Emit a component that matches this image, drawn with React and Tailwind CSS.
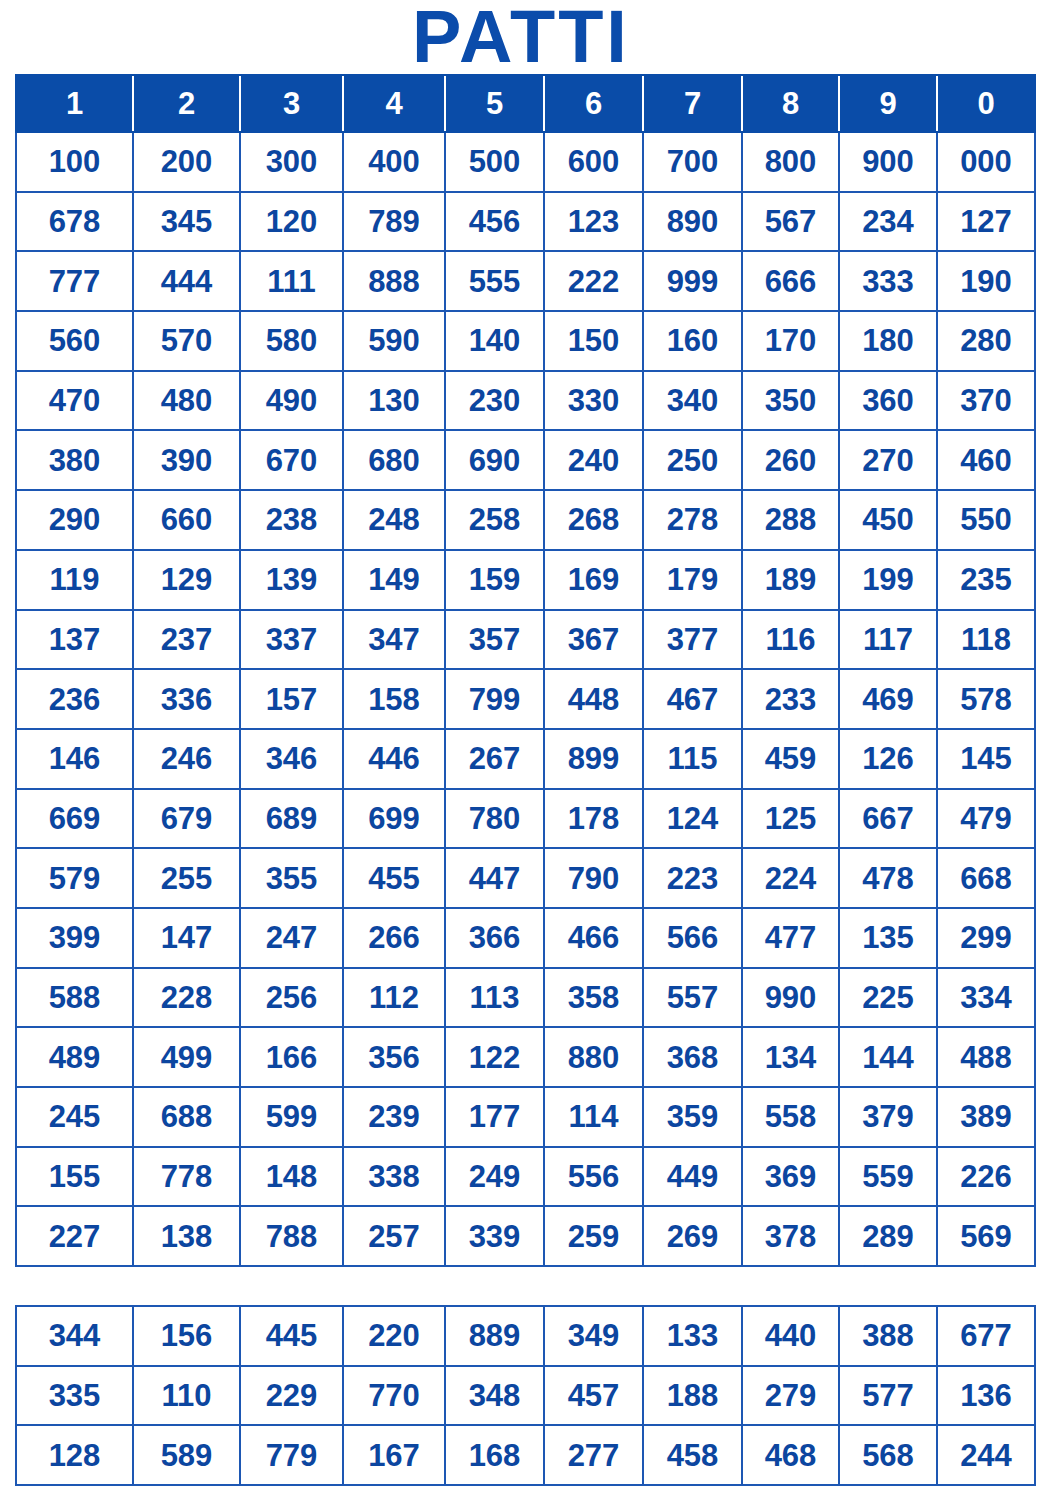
const header = ['1', '2', '3', '4', '5', '6', '7', '8', '9', '0'];

const widths = ['w-[117px]', 'w-[107px]', 'w-[103px]', 'w-[102px]', 'w-[99px]', 'w-[99px]', 'w-[99px]', 'w-[97px]', 'w-[98px]', 'w-[98px]'];

const mainRows = [
  ['100', '200', '300', '400', '500', '600', '700', '800', '900', '000'],
  ['678', '345', '120', '789', '456', '123', '890', '567', '234', '127'],
  ['777', '444', '111', '888', '555', '222', '999', '666', '333', '190'],
  ['560', '570', '580', '590', '140', '150', '160', '170', '180', '280'],
  ['470', '480', '490', '130', '230', '330', '340', '350', '360', '370'],
  ['380', '390', '670', '680', '690', '240', '250', '260', '270', '460'],
  ['290', '660', '238', '248', '258', '268', '278', '288', '450', '550'],
  ['119', '129', '139', '149', '159', '169', '179', '189', '199', '235'],
  ['137', '237', '337', '347', '357', '367', '377', '116', '117', '118'],
  ['236', '336', '157', '158', '799', '448', '467', '233', '469', '578'],
  ['146', '246', '346', '446', '267', '899', '115', '459', '126', '145'],
  ['669', '679', '689', '699', '780', '178', '124', '125', '667', '479'],
  ['579', '255', '355', '455', '447', '790', '223', '224', '478', '668'],
  ['399', '147', '247', '266', '366', '466', '566', '477', '135', '299'],
  ['588', '228', '256', '112', '113', '358', '557', '990', '225', '334'],
  ['489', '499', '166', '356', '122', '880', '368', '134', '144', '488'],
  ['245', '688', '599', '239', '177', '114', '359', '558', '379', '389'],
  ['155', '778', '148', '338', '249', '556', '449', '369', '559', '226'],
  ['227', '138', '788', '257', '339', '259', '269', '378', '289', '569'],
];

const extraRows = [
  ['344', '156', '445', '220', '889', '349', '133', '440', '388', '677'],
  ['335', '110', '229', '770', '348', '457', '188', '279', '577', '136'],
  ['128', '589', '779', '167', '168', '277', '458', '468', '568', '244'],
];

function Cols() {
  return (
    <colgroup>
      {widths.map((w, i) => (
        <col key={i} className={w} />
      ))}
    </colgroup>
  );
}

function Body({ rows }) {
  return (
    <tbody>
      {rows.map((row, r) => (
        <tr key={r}>
          {row.map((n, c) => (
            <td
              key={c}
              className="h-[59.7px] border-2 border-[#1d57b3] p-0 text-center align-middle text-[31px] font-bold leading-none text-[#0c46a0]"
            >
              {n}
            </td>
          ))}
        </tr>
      ))}
    </tbody>
  );
}

export default function App() {
  return (
    <div className="min-h-[1498px] w-[1050px] bg-white font-['Liberation_Sans',Arial,sans-serif]">
      {/* titre */}
      <div className="flex h-[74px] items-start justify-center pr-[8px]">
        <h1 className="text-[74px] font-bold leading-[74px] tracking-[3px] text-[#0b4cab]">PATTI</h1>
      </div>

      <div className="pl-[15px]">
        <table className="w-[1019px] table-fixed border-collapse">
          <Cols />
          <thead>
            <tr className="bg-[#0a4ca8]">
              {header.map((h, i) => (
                <th
                  key={h}
                  className={`h-[57px] border-y-2 border-[#0a4ca8] p-0 text-center align-middle text-[31px] font-bold leading-none text-white ${
                    i === 0 ? 'border-l-2' : 'border-l-2 border-l-white'
                  } ${i === 9 ? 'border-r-2' : ''}`}
                >
                  {h}
                </th>
              ))}
            </tr>
          </thead>
          <Body rows={mainRows} />
        </table>

        <table className="mt-[38px] w-[1019px] table-fixed border-collapse">
          <Cols />
          <Body rows={extraRows} />
        </table>
      </div>
    </div>
  );
}
